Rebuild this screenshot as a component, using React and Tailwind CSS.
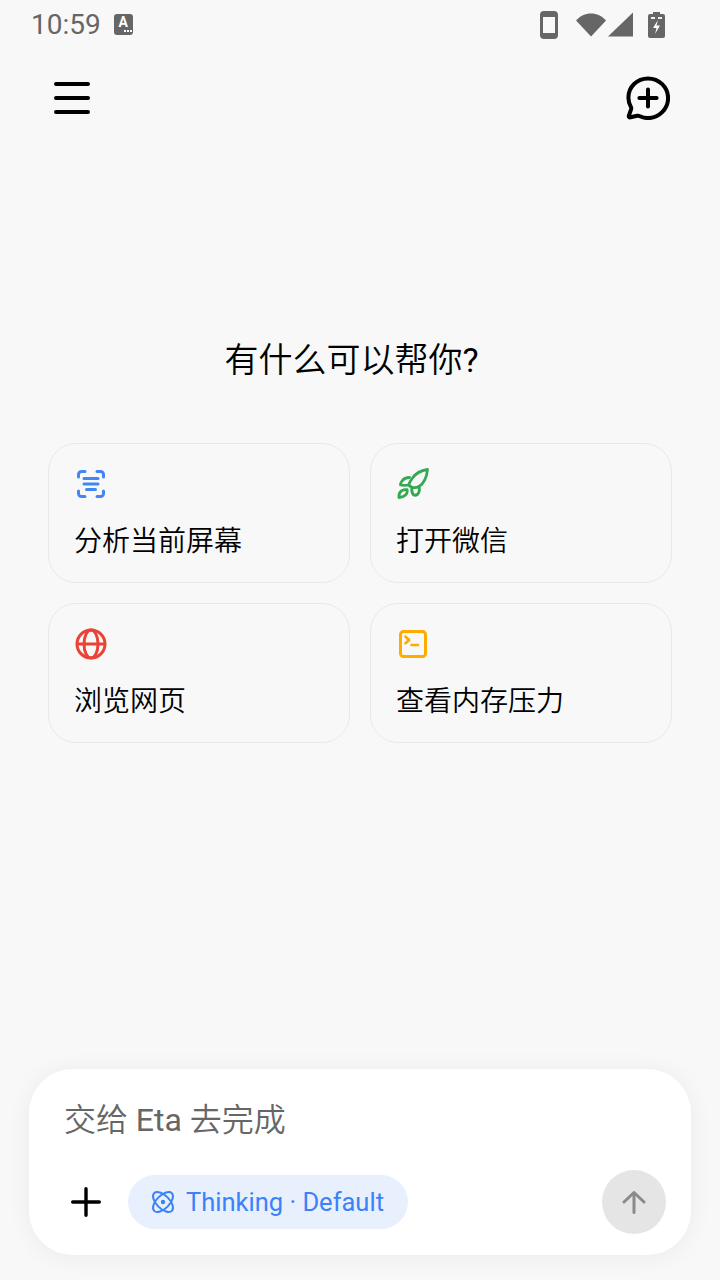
import React from "react";

const font = "font-['Roboto','Noto_Sans_CJK_SC',sans-serif]";

const ScanIcon = () => (
  <svg width="32" height="32" viewBox="0 0 32 32" fill="none" stroke="#4285F4" strokeWidth="3" strokeLinecap="round" strokeLinejoin="round">
    <path d="M10 3.500H6.500a3 3 0 0 0-3 3V9" />
    <path d="M22 3.500h3.500a3 3 0 0 1 3 3V9" />
    <path d="M10 28.500H6.500a3 3 0 0 1-3-3V23" />
    <path d="M22 28.500h3.500a3 3 0 0 0 3-3V23" />
    <path d="M9 10.500h14M9 16h14M11.500 21.500h9" />
  </svg>
);

const RocketIcon = () => (
  <svg width="32" height="32" viewBox="0 0 32 32" fill="none" stroke="#34A853" strokeWidth="2.800" strokeLinecap="round" strokeLinejoin="round">
    <path d="M30.500 1.500C24 2.500 19 5 15.500 10c-1.500 2-3 4.500-4 7l3.500 2.500c3 .5 5 .2 7-1 4.500-2.500 8-9.500 8.500-17Z" />
    <path d="M12.500 9.500C9 9.500 6.500 11 5 13c-1 1.300-1.500 2.800-1.500 4 2.500.5 5.500.5 8 0" />
    <path d="M15 19.500c-.5 2.500 0 5.500 1.500 7.500 2.500.8 4.500-.5 5.500-3 .5-1.500.5-3.500.2-5.500" />
    <path d="M2 29.500c-.3-3 1-6 3-7 1.500-.8 3.500-1 5-.8.500 2 0 4-1.500 5.300-1.500 1.500-4 2.500-6.500 2.500Z" />
  </svg>
);

const GlobeIcon = () => (
  <svg width="32" height="32" viewBox="0 0 32 32" fill="none" stroke="#EA4335" strokeWidth="3">
    <circle cx="16" cy="16" r="14" />
    <path d="M2 16h28" />
    <ellipse cx="16" cy="16" rx="7" ry="14" />
  </svg>
);

const TerminalIcon = () => (
  <svg width="32" height="32" viewBox="0 0 32 32" fill="none" stroke="#FFAB00" strokeWidth="3" strokeLinecap="round" strokeLinejoin="round">
    <rect x="3.500" y="3.500" width="25" height="25" rx="3" />
    <path d="M8.500 8.700l3.800 3.300-3.800 3.300M14.500 17h6.500" strokeWidth="2.600" />
  </svg>
);

const suggestions = [
  { icon: <ScanIcon />, label: "分析当前屏幕" },
  { icon: <RocketIcon />, label: "打开微信" },
  { icon: <GlobeIcon />, label: "浏览网页" },
  { icon: <TerminalIcon />, label: "查看内存压力" },
];

function StatusBar() {
  return (
    <div className="h-12 flex items-center pl-[31px] pr-[55px] pt-[1px] text-[#666666]">
      <span className="text-[28px] leading-none">10:59</span>
      <div className="ml-[13px] w-[19px] h-[21px] bg-[#666666] rounded-[3px] flex flex-col items-center text-white">
        <span className="text-[14px] leading-[16px] font-bold">A</span>
        <span className="flex gap-[1px] ml-auto mr-[1px]">
          <i className="w-[2px] h-[2px] bg-white" />
          <i className="w-[2px] h-[2px] bg-white" />
          <i className="w-[2px] h-[2px] bg-white" />
        </span>
      </div>
      <div className="ml-auto flex items-center">
        <svg width="18" height="28" viewBox="0 0 18 28" fill="none">
          <rect x="1.500" y="1.500" width="15" height="25" rx="2.500" stroke="#666666" strokeWidth="3" />
          <rect x="1" y="1" width="16" height="5" rx="2" fill="#666666" />
          <rect x="1" y="22" width="16" height="5" rx="2" fill="#666666" />
        </svg>
        <svg className="ml-[18px]" width="30" height="25" viewBox="0 0 30 25">
          <path d="M0 8.500C4 4 9.500 1.500 15 1.500S26 4 30 8.500L15 24.500Z" fill="#666666" />
        </svg>
        <svg width="26" height="25" viewBox="0 0 26 25" className="ml-[2px]">
          <path d="M0 24.500 25 0.500V24.500Z" fill="#666666" />
        </svg>
        <svg className="ml-[14px]" width="17" height="26" viewBox="0 0 17 26">
          <path d="M5 0h7v2h3a2 2 0 0 1 2 2v20a2 2 0 0 1-2 2H2a2 2 0 0 1-2-2V4a2 2 0 0 1 2-2h3Z" fill="#666666" />
          <path d="M3 5h4v2H3ZM10 5h4v2h-4Z" fill="#f0f0f0" />
          <path d="M10 8 5 16h3.500L7 22l5-8.500H8.500Z" fill="#ffffff" />
        </svg>
      </div>
    </div>
  );
}

function Header() {
  return (
    <div className="h-[100px] flex items-center justify-between pl-[54px] pr-[50px]">
      <svg width="36" height="32" viewBox="0 0 36 32" stroke="#000" strokeWidth="4" strokeLinecap="round">
        <path d="M2 2h32M2 16h32M2 30h32" />
      </svg>
      <svg width="44" height="44" viewBox="0 0 46 46" fill="none" stroke="#000" strokeWidth="4.200" strokeLinecap="round" strokeLinejoin="round">
        <path d="M23 2.500C11.500 2.500 2.500 11.500 2.500 22.500c0 3.500 1 6.800 2.500 9.500.5 1 .6 1.800.3 2.800L3 41.500c-.4 1.200.5 2 1.700 1.700l7-1.600c1-.2 1.800-.1 2.800.4C17.500 43.500 20 44 23 44c11.500 0 21-9.500 21-21S34.500 2.500 23 2.500Z" />
        <path d="M14 23h18M23 14v18" />
      </svg>
    </div>
  );
}

export default function App() {
  return (
    <div className={`${font} w-[720px] h-[1280px] bg-[#f8f8f8] flex flex-col overflow-hidden`}>
      <StatusBar />
      <Header />

      <h1 className="mt-[187px] pr-[17px] text-center text-[34px] leading-[50px] font-[350] text-black">
        有什么可以帮你<span className="font-normal">?</span>
      </h1>

      <div className="mt-[58px] px-12 grid grid-cols-2 gap-5">
        {suggestions.map((s) => (
          <div key={s.label} className="h-[140px] rounded-[28px] border border-[#e8e8e8] pl-[25px] pt-[24px] flex flex-col">
            <span className="ml-[1px]">{s.icon}</span>
            <span className="mt-[21px] text-[28px] leading-[42px] font-[350] text-black">{s.label}</span>
          </div>
        ))}
      </div>

      <div className="flex-1" />

      <div className="mx-[29px] mb-[25px] h-[186px] rounded-[44px] bg-white shadow-[0_2px_24px_rgba(0,0,0,0.06)] flex flex-col pl-[35px] pr-[25px]">
        <div className="pt-[29px] text-[32px] leading-[44px] font-[350] text-[#666666]">
          交给 <span className="font-normal">Eta</span> 去完成
        </div>
        <div className="mt-[28px] flex items-center">
          <svg width="30" height="30" viewBox="0 0 30 30" className="ml-[7px]" stroke="#000" strokeWidth="3.400" strokeLinecap="round">
            <path d="M15 1.700v26.600M1.700 15h26.600" />
          </svg>
          <div className="ml-[27px] h-[54px] w-[280px] rounded-full bg-[#e8f0fe] flex items-center pl-[23px] text-[#3b82f6]">
            <svg width="24" height="24" viewBox="0 0 24 24" fill="none" stroke="#3b82f6" strokeWidth="2">
              <ellipse cx="12" cy="12" rx="12.500" ry="6.500" transform="rotate(45 12 12)" />
              <ellipse cx="12" cy="12" rx="12.500" ry="6.500" transform="rotate(-45 12 12)" />
              <circle cx="12" cy="12" r="2.200" fill="#3b82f6" stroke="none" />
            </svg>
            <span className="ml-[11px] pt-[2px] text-[25.500px] leading-none">Thinking · Default</span>
          </div>
          <div className="ml-auto w-16 h-16 rounded-full bg-[#e5e5e5] flex items-center justify-center">
            <svg width="24" height="24" viewBox="0 0 24 24" fill="none" stroke="#8a8a8a" strokeWidth="3" strokeLinecap="round" strokeLinejoin="round">
              <path d="M12 22.500V2.500M2 12 12 2.500 22 12" />
            </svg>
          </div>
        </div>
      </div>
    </div>
  );
}
